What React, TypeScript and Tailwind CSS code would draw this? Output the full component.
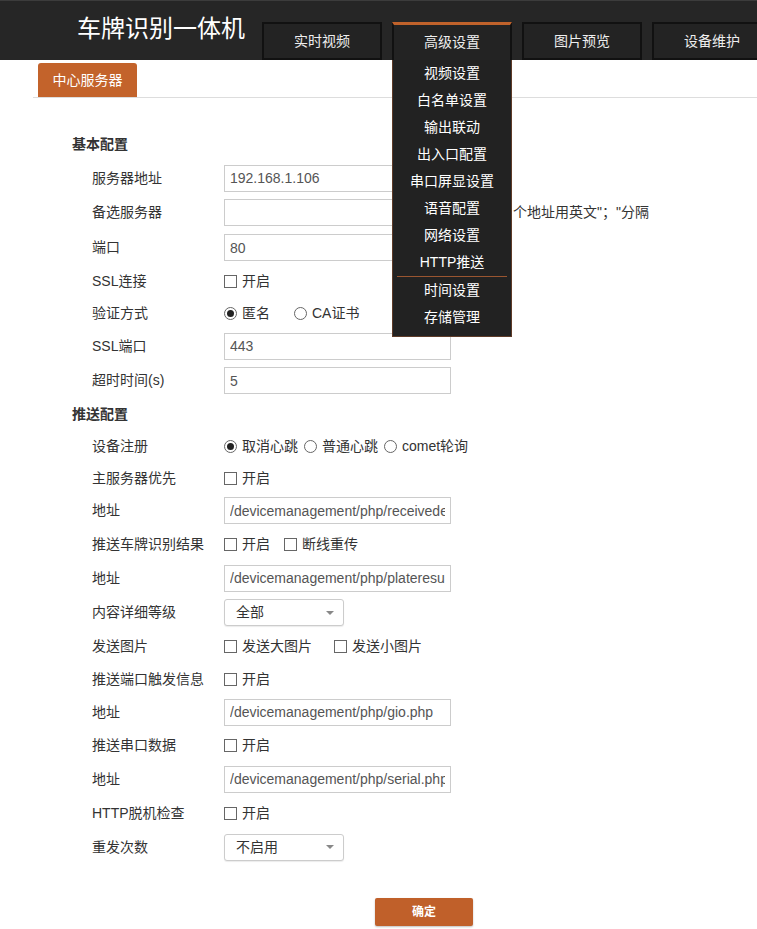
import React from "react";

const Check = () => (
  <span className="inline-block w-[13px] h-[13px] border border-[#666] bg-white shrink-0" />
);

const Radio = ({ on = false }: { on?: boolean }) => (
  <span className="w-[13px] h-[13px] rounded-full border border-[#666] bg-white flex items-center justify-center shrink-0">
    {on && <span className="w-[7px] h-[7px] rounded-full bg-[#222]" />}
  </span>
);

const TextBox = ({ value = "" }: { value?: string }) => (
  <input
    readOnly
    value={value}
    className="w-[227px] h-[27px] border border-[#ccc] px-[5px] text-[14px] text-[#555] bg-white outline-none"
  />
);

const Select = ({ value }: { value: string }) => (
  <div className="w-[120px] h-[27px] rounded-[3px] border border-[#ccc] shadow-[0_1px_1px_rgba(0,0,0,0.08)] bg-white pl-[11px] pr-[9px] flex items-center justify-between text-[14px] text-[#333]">
    <span>{value}</span>
    <span className="w-0 h-0 border-l-[4px] border-r-[4px] border-t-[4px] border-l-transparent border-r-transparent border-t-[#888]" />
  </div>
);

function Row({ label, h, children }: { label: string; h: string; children?: React.ReactNode }) {
  return (
    <div className={`flex items-center ${h}`}>
      <div className="w-[152px] pl-[20px] text-[14px] text-[#333] whitespace-nowrap">{label}</div>
      <div className="flex items-center text-[14px] text-[#333] whitespace-nowrap">{children}</div>
    </div>
  );
}

function Heading({ text, h }: { text: string; h: string }) {
  return <div className={`flex items-center font-bold text-[14px] text-[#333] ${h}`}>{text}</div>;
}

const menu = ["视频设置", "白名单设置", "输出联动", "出入口配置", "串口屏显设置", "语音配置", "网络设置", "HTTP推送"];
const menu2 = ["时间设置", "存储管理"];

export default function App() {
  return (
    <div className="w-full min-h-[929px] overflow-hidden bg-white font-['Liberation_Sans','Noto_Sans_CJK_SC',sans-serif]">
      {/* Header */}
      <div className="h-[60px] bg-[#262626] border-t border-[#3c3c3c] flex relative z-10">
        <div className="pl-[77px] pt-[13px] text-[24px] leading-[30px] text-white whitespace-nowrap">车牌识别一体机</div>
        <div className="ml-[17px] flex gap-[10px] self-end shrink-0">
          <div className="w-[120px] h-[38px] border-2 border-[#111] bg-[#232323] text-[14px] text-[#eee] flex items-center justify-center">实时视频</div>
          <div className="relative w-[120px] h-[38px] border-x-2 border-[#111] border-t-[3px] border-t-[#c0622b] bg-[#232323] text-[14px] text-[#eee] flex items-center justify-center">
            高级设置
            {/* dropdown menu */}
            <div className="absolute top-full -left-[2px] w-[120px] bg-[#222] border border-t-0 border-[#5e3b28] pb-[5px]">
              {menu.map((m) => (
                <div key={m} className="h-[27px] flex items-center justify-center text-[14px] text-white">{m}</div>
              ))}
              <div className="mx-[4px] h-px bg-[#9a5530]" />
              {menu2.map((m) => (
                <div key={m} className="h-[27px] flex items-center justify-center text-[14px] text-white">{m}</div>
              ))}
            </div>
          </div>
          <div className="w-[120px] h-[38px] border-2 border-[#111] bg-[#232323] text-[14px] text-[#eee] flex items-center justify-center">图片预览</div>
          <div className="w-[120px] h-[38px] border-2 border-[#111] bg-[#232323] text-[14px] text-[#eee] flex items-center justify-center">设备维护</div>
        </div>
      </div>

      {/* Sub tab */}
      <div className="ml-[33px] mt-[3px] border-b border-[#ddd] flex">
        <div className="ml-[5px] w-[99px] h-[34px] rounded-t-[3px] bg-[#c3632b] text-white text-[14px] flex items-center justify-center">中心服务器</div>
      </div>

      {/* Form */}
      <div className="pl-[72px] pt-[30px]">
        <Heading text="基本配置" h="h-[33px]" />
        <Row label="服务器地址" h="h-[34px]"><TextBox value="192.168.1.106" /></Row>
        <Row label="备选服务器" h="h-[35px]">
          <TextBox />
          <span className="ml-[62px]">个地址用英文"；"分隔</span>
        </Row>
        <Row label="端口" h="h-[35px]"><TextBox value="80" /></Row>
        <Row label="SSL连接" h="h-[32px]"><Check /><span className="ml-[5px]">开启</span></Row>
        <Row label="验证方式" h="h-[32px]">
          <Radio on /><span className="ml-[5px]">匿名</span>
          <span className="ml-[24px]"><Radio /></span><span className="ml-[5px]">CA证书</span>
        </Row>
        <Row label="SSL端口" h="h-[34px]"><TextBox value="443" /></Row>
        <Row label="超时时间(s)" h="h-[35px]"><TextBox value="5" /></Row>

        <Heading text="推送配置" h="h-[32px]" />
        <Row label="设备注册" h="h-[32px]">
          <Radio on /><span className="ml-[5px]">取消心跳</span>
          <span className="ml-[6px]"><Radio /></span><span className="ml-[5px]">普通心跳</span>
          <span className="ml-[6px]"><Radio /></span><span className="ml-[5px]">comet轮询</span>
        </Row>
        <Row label="主服务器优先" h="h-[32px]"><Check /><span className="ml-[5px]">开启</span></Row>
        <Row label="地址" h="h-[33px]"><TextBox value="/devicemanagement/php/receivedeviceinfo.php" /></Row>
        <Row label="推送车牌识别结果" h="h-[34px]">
          <Check /><span className="ml-[5px]">开启</span>
          <span className="ml-[14px] flex"><Check /></span><span className="ml-[5px]">断线重传</span>
        </Row>
        <Row label="地址" h="h-[34px]"><TextBox value="/devicemanagement/php/plateresult.php" /></Row>
        <Row label="内容详细等级" h="h-[35px]"><Select value="全部" /></Row>
        <Row label="发送图片" h="h-[33px]">
          <Check /><span className="ml-[5px]">发送大图片</span>
          <span className="ml-[22px] flex"><Check /></span><span className="ml-[5px]">发送小图片</span>
        </Row>
        <Row label="推送端口触发信息" h="h-[32px]"><Check /><span className="ml-[5px]">开启</span></Row>
        <Row label="地址" h="h-[34px]"><TextBox value="/devicemanagement/php/gio.php" /></Row>
        <Row label="推送串口数据" h="h-[33px]"><Check /><span className="ml-[5px]">开启</span></Row>
        <Row label="地址" h="h-[34px]"><TextBox value="/devicemanagement/php/serial.php" /></Row>
        <Row label="HTTP脱机检查" h="h-[34px]"><Check /><span className="ml-[5px]">开启</span></Row>
        <Row label="重发次数" h="h-[34px]"><Select value="不启用" /></Row>
      </div>

      <div className="pl-[375px] mt-[34px]">
        <button className="w-[98px] h-[28px] rounded-[2px] bg-[#c0602a] text-white text-[12px] font-bold shadow-[0_1px_2px_rgba(0,0,0,0.25)]">确定</button>
      </div>
    </div>
  );
}
